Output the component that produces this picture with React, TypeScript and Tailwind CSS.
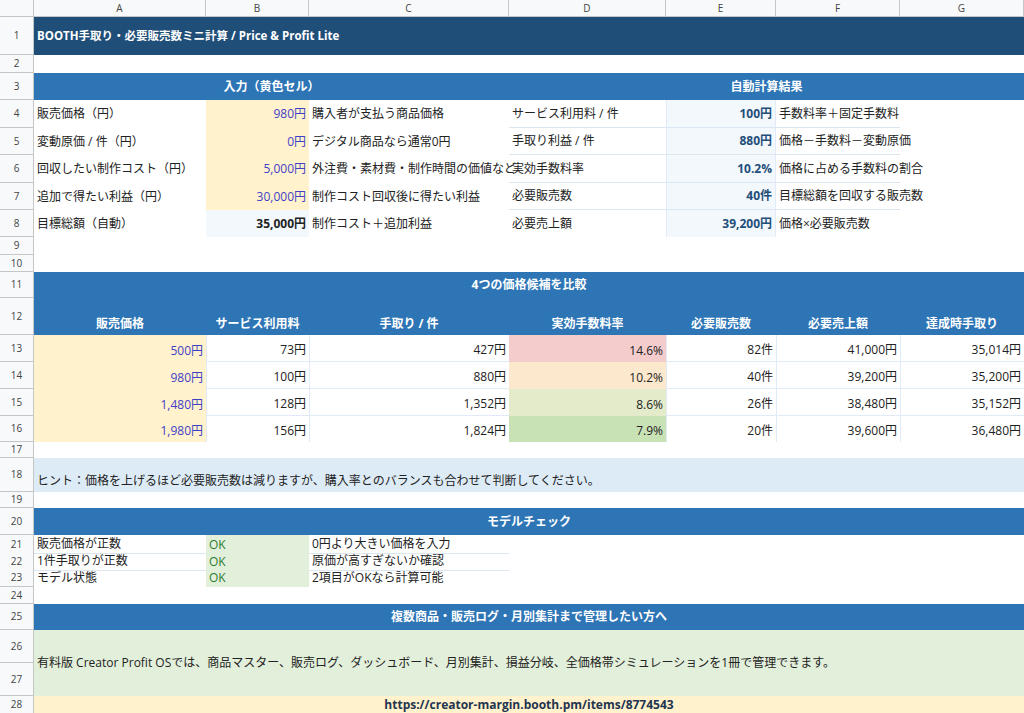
import React from 'react';

const font = { fontFamily: '"Open Sans", "Noto Sans CJK JP", sans-serif' };
const cols = 'grid grid-cols-[34px_172px_103px_200px_157px_110px_124px_124px]';

const Num: React.FC<{ n: number | string }> = ({ n }) => (
    <div className="bg-[#f8f9fa] border-r border-b border-[#c4c7c5] text-[10px] text-[#444] flex items-center justify-center">{n}</div>
);

const Cell: React.FC<{ className?: string; children?: React.ReactNode }> = ({ className = '', children }) => (
    <div className={`flex items-center whitespace-nowrap px-[3px] min-w-0 ${className}`}>{children}</div>
);

const Row: React.FC<{ h: string; n: number; children?: React.ReactNode }> = ({ h, n, children }) => (
    <div className={`${cols} ${h}`}>
        <Num n={n} />
        {children}
    </div>
);

const inputs = [
    ['販売価格（円）', '980円', '購入者が支払う商品価格', 'サービス利用料 / 件', '100円', '手数料率＋固定手数料'],
    ['変動原価 / 件（円）', '0円', 'デジタル商品なら通常0円', '手取り利益 / 件', '880円', '価格－手数料－変動原価'],
    ['回収したい制作コスト（円）', '5,000円', '外注費・素材費・制作時間の価値など', '実効手数料率', '10.2%', '価格に占める手数料の割合'],
    ['追加で得たい利益（円）', '30,000円', '制作コスト回収後に得たい利益', '必要販売数', '40件', '目標総額を回収する販売数'],
    ['目標総額（自動）', '35,000円', '制作コスト＋追加利益', '必要売上額', '39,200円', '価格×必要販売数'],
];
const inputH = ['h-[28px]', 'h-[27px]', 'h-[28px]', 'h-[27px]', 'h-[27px]'];

const compare = [
    ['500円', '73円', '427円', '14.6%', '82件', '41,000円', '35,014円', 'bg-[#f4cccc]'],
    ['980円', '100円', '880円', '10.2%', '40件', '39,200円', '35,200円', 'bg-[#fce8cc]'],
    ['1,480円', '128円', '1,352円', '8.6%', '26件', '38,480円', '35,152円', 'bg-[#e3ebca]'],
    ['1,980円', '156円', '1,824円', '7.9%', '20件', '39,600円', '36,480円', 'bg-[#c9e2b5]'],
];

const checks = [
    ['販売価格が正数', '0円より大きい価格を入力'],
    ['1件手取りが正数', '原価が高すぎないか確認'],
    ['モデル状態', '2項目がOKなら計算可能'],
];

export default function App() {
    const band = 'bg-[#2e75b6] text-white font-bold justify-center';
    const line = 'border-b border-[#dbe6f3]';
    return (
        <div style={font} className="w-[1024px] h-[713px] overflow-hidden bg-white text-[12px] text-[#222]">
            <div className={`${cols} h-[17px]`}>
                <div className="bg-[#f8f9fa] border-r border-b border-[#c4c7c5]" />
                {['A', 'B', 'C', 'D', 'E', 'F', 'G'].map((c) => (
                    <div key={c} className="bg-[#f8f9fa] border-r border-b border-[#c4c7c5] text-[10px] text-[#444] flex items-center justify-center">{c}</div>
                ))}
            </div>

            <Row h="h-[38px]" n={1}>
                <Cell className="col-span-7 bg-[#1f4e79] text-white font-bold text-[11.5px]">BOOTH手取り・必要販売数ミニ計算 / Price &amp; Profit Lite</Cell>
            </Row>
            <Row h="h-[18px]" n={2} />
            <Row h="h-[27px]" n={3}>
                <Cell className={`col-span-3 ${band}`}>入力（黄色セル）</Cell>
                <Cell className={`col-span-4 ${band}`}>自動計算結果</Cell>
            </Row>

            {inputs.map((r, i) => (
                <Row key={i} h={inputH[i]} n={4 + i}>
                    <Cell>{r[0]}</Cell>
                    <Cell className={`justify-end ${i === 4 ? 'bg-[#f3f8fd] font-bold' : 'bg-[#fff2cc] text-[#3f3fc8]'}`}>{r[1]}</Cell>
                    <Cell className="overflow-visible z-10">{r[2]}</Cell>
                    <Cell className={i < 4 ? line : ''}>{r[3]}</Cell>
                    <Cell className={`justify-end bg-[#f3f8fd] text-[#1f4e79] font-bold border-x border-[#e1ebf7] ${i < 4 ? 'border-b border-b-[#dbe6f3]' : ''}`}>{r[4]}</Cell>
                    <Cell className={`overflow-visible ${i < 4 ? line : ''}`}>{r[5]}</Cell>
                    <Cell />
                </Row>
            ))}

            <Row h="h-[18px]" n={9} />
            <Row h="h-[17px]" n={10} />
            <Row h="h-[26px]" n={11}>
                <Cell className={`col-span-7 ${band}`}>4つの価格候補を比較</Cell>
            </Row>
            <Row h="h-[37px]" n={12}>
                {['販売価格', 'サービス利用料', '手取り / 件', '実効手数料率', '必要販売数', '必要売上額', '達成時手取り'].map((h) => (
                    <Cell key={h} className="bg-[#2e75b6] text-white font-bold justify-center items-end pb-[2px]">{h}</Cell>
                ))}
            </Row>

            {compare.map((r, i) => (
                <Row key={i} h={i === 3 ? 'h-[26px]' : 'h-[27px]'} n={13 + i}>
                    <Cell className="justify-end items-end pb-[2px] bg-[#fff2cc] text-[#3f3fc8]">{r[0]}</Cell>
                    {[1, 2].map((k) => (
                        <Cell key={k} className={`justify-end items-end pb-[2px] border-l border-[#e1ebf7] ${i < 3 ? line : ''}`}>{r[k]}</Cell>
                    ))}
                    <Cell className={`justify-end items-end pb-[2px] ${r[7]}`}>{r[3]}</Cell>
                    {[4, 5, 6].map((k) => (
                        <Cell key={k} className={`justify-end items-end pb-[2px] border-l border-[#e1ebf7] ${i < 3 ? line : ''}`}>{r[k]}</Cell>
                    ))}
                </Row>
            ))}

            <Row h="h-[16px]" n={17} />
            <Row h="h-[34px]" n={18}>
                <Cell className="col-span-7 bg-[#ddebf7] items-end pb-[2px]">ヒント：価格を上げるほど必要販売数は減りますが、購入率とのバランスも合わせて判断してください。</Cell>
            </Row>
            <Row h="h-[16px]" n={19} />
            <Row h="h-[27px]" n={20}>
                <Cell className={`col-span-7 ${band}`}>モデルチェック</Cell>
            </Row>

            {checks.map((r, i) => (
                <Row key={i} h={i === 2 ? 'h-[18px]' : 'h-[17px]'} n={21 + i}>
                    <Cell className={i < 2 ? line : ''}>{r[0]}</Cell>
                    <Cell className="bg-[#e2efda] text-[#2e7d32]">OK</Cell>
                    <Cell className={i < 2 ? line : ''}>{r[1]}</Cell>
                    <Cell className="col-span-4" />
                </Row>
            ))}

            <Row h="h-[17px]" n={24} />
            <Row h="h-[26px]" n={25}>
                <Cell className={`col-span-7 ${band}`}>複数商品・販売ログ・月別集計まで管理したい方へ</Cell>
            </Row>
            <div className={`${cols} h-[66px]`}>
                <div className="grid grid-rows-2">
                    <Num n={26} />
                    <Num n={27} />
                </div>
                <Cell className="col-span-7 bg-[#e2efda]">有料版 Creator Profit OSでは、商品マスター、販売ログ、ダッシュボード、月別集計、損益分岐、全価格帯シミュレーションを1冊で管理できます。</Cell>
            </div>
            <Row h="h-[18px]" n={28}>
                <Cell className="col-span-7 bg-[#fff2cc] font-bold justify-center text-[#1f3550]">https://creator-margin.booth.pm/items/8774543</Cell>
            </Row>
        </div>
    );
}
